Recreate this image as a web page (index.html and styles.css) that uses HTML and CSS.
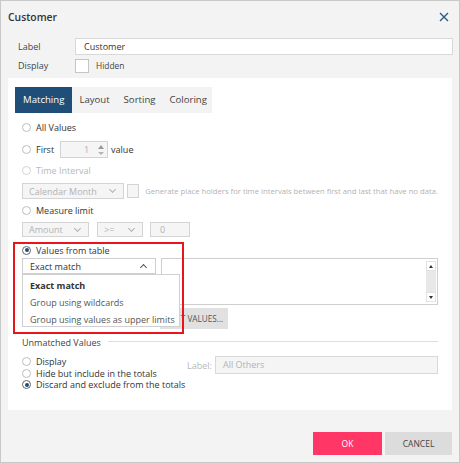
FILE: index.html
```html
<!DOCTYPE html>
<html>
<head>
<meta charset="utf-8">
<link rel="stylesheet" href="styles.css">
</head>
<body>
<div class="dialog">
  <div class="header">
    <div class="title">Customer</div>
    <svg class="close" width="10" height="10" viewBox="0 0 10 10"><path d="M1 1L9 9M9 1L1 9" stroke="#2a5783" stroke-width="1.3" fill="none"/></svg>
  </div>
  <div class="fields">
    <div class="field-row">
      <span class="field-label">Label</span>
      <div class="text-input">Customer</div>
    </div>
    <div class="field-row display-row">
      <span class="field-label">Display</span>
      <span class="checkbox"></span>
      <span class="hidden-text">Hidden</span>
    </div>
  </div>
  <div class="panel">
    <div class="tabs">
      <div class="tab active">Matching</div>
      <div class="tab">Layout</div>
      <div class="tab">Sorting</div>
      <div class="tab">Coloring</div>
    </div>
    <div class="opts">
      <div class="row r-all"><span class="radio"></span><span>All Values</span></div>
      <div class="row r-first">
        <span class="radio"></span><span>First</span>
        <div class="spinner">
          <span class="spin-val">1</span>
          <span class="spin-arrows"><span class="up"></span><span class="down"></span></span>
        </div>
        <span>value</span>
      </div>
      <div class="row r-time disabled"><span class="radio"></span><span>Time Interval</span></div>
      <div class="row r-cal">
        <div class="select dis w-cal"><span>Calendar Month</span><span class="chev"></span></div>
        <span class="checkbox small"></span>
        <span class="gen-text">Generate place holders for time intervals between first and last that have no data.</span>
      </div>
      <div class="row r-measure"><span class="radio"></span><span>Measure limit</span></div>
      <div class="row r-sel">
        <div class="select dis w-amt"><span>Amount</span><span class="chev"></span></div>
        <div class="select dis w-op"><span>&gt;=</span><span class="chev"></span></div>
        <div class="select dis w-zero"><span>0</span></div>
      </div>
      <div class="row r-table"><span class="radio checked"></span><span>Values from table</span></div>
      <div class="table-area">
        <div class="left-col">
          <div class="select open w-match"><span>Exact match</span><span class="chev up-chev"></span></div>
          <div class="dropdown">
            <div class="dd-item bold">Exact match</div>
            <div class="dd-item">Group using wildcards</div>
            <div class="dd-item">Group using values as upper limits</div>
          </div>
        </div>
        <div class="right-col">
          <div class="textarea">
            <div class="sb">
              <div class="sb-btn"><span class="tri-up"></span></div>
              <div class="sb-track"></div>
              <div class="sb-btn"><span class="tri-down"></span></div>
            </div>
          </div>
          <div class="edit-btn"><span class="edit-hidden">EDI</span>T VALUES...</div>
        </div>
      </div>
      <div class="unmatched-head"><span>Unmatched Values</span><span class="line"></span></div>
      <div class="unmatched">
        <div class="um-col">
          <div class="um-row"><span class="radio"></span><span>Display</span></div>
          <div class="um-row"><span class="radio"></span><span>Hide but include in the totals</span></div>
          <div class="um-row"><span class="radio checked"></span><span>Discard and exclude from the totals</span></div>
        </div>
        <div class="um-label">
          <span class="lbl">Label:</span>
          <div class="other-input">All Others</div>
        </div>
      </div>
    </div>
    <div class="highlight"></div>
  </div>
  <div class="footer">
    <div class="btn ok">OK</div>
    <div class="btn cancel">CANCEL</div>
  </div>
</div>
</body>
</html>
```
FILE: styles.css
```css
* { box-sizing: border-box; }
html, body { margin: 0; padding: 0; }
body {
  font-family: "Open Sans", "Noto Sans", sans-serif;
  font-size: 9px;
  color: #333;
  background: #fff;
}
.dialog {
  width: 460px;
  height: 463px;
  border: 1px solid #c9c9c9;
  background: #f3f3f3;
  padding: 0 7px;
}
.header {
  height: 31px;
  display: flex;
  align-items: center;
  justify-content: space-between;
}
.title {
  font-size: 10.4px;
  font-weight: 600;
  color: #333;
}
.close { margin-right: 3px; }
.fields { margin-top: 6px; margin-right: -1px; }
.field-row {
  display: flex;
  align-items: center;
  height: 17px;
}
.field-label {
  width: 67px;
  padding-left: 10px;
  color: #444;
}
.text-input {
  flex: 1;
  height: 17px;
  background: #fff;
  border: 1px solid #d9d9d9;
  padding-left: 8px;
  line-height: 15px;
}
.display-row { margin-top: 3px; height: 15px; }
.checkbox {
  width: 14px;
  height: 14px;
  background: #fff;
  border: 1px solid #c4c4c4;
  display: inline-block;
}
.hidden-text { margin-left: 7px; font-size: 8.4px; color: #444; }
.panel {
  margin-top: 5px;
  height: 332px;
  background: #fff;
  padding: 9px 7px;
  position: relative;
}
.tabs {
  display: flex;
  width: 197px;
  height: 26px;
  background: #f3f3f3;
}
.tab {
  padding: 0 7px;
  line-height: 26px;
  color: #444;
  font-size: 9.6px;
}
.tab.active {
  background: #1f4e79;
  color: #fff;
  padding: 0 8px;
}
.opts { margin: 0 7px; }
.row {
  display: flex;
  align-items: center;
  height: 16px;
}
.radio {
  width: 9px;
  height: 9px;
  border: 1px solid #bdbdbd;
  border-radius: 50%;
  margin-right: 5px;
  display: inline-block;
  position: relative;
  flex: none;
}
.radio.checked { border-color: #666; }
.radio.checked::after {
  content: "";
  position: absolute;
  left: 1.5px; top: 1.5px;
  width: 4px; height: 4px;
  border-radius: 50%;
  background: #1f4e79;
}
.disabled { color: #b8b8b8; }
.disabled .radio { border-color: #d4d4d4; }
.r-all { margin-top: 6px; }
.r-first { margin-top: 6px; height: 17px; }
.spinner {
  width: 48px;
  height: 17px;
  border: 1px solid #d4d4d4;
  background: #f5f5f5;
  margin: 0 3px 0 6px;
  display: flex;
  align-items: center;
  justify-content: flex-end;
  color: #b0b0b0;
}
.spin-val { margin-right: 9px; }
.spin-arrows {
  display: flex;
  flex-direction: column;
  gap: 3px;
  margin-right: 3px;
}
.spin-arrows .up { width: 0; height: 0; border-left: 3px solid transparent; border-right: 3px solid transparent; border-bottom: 4px solid #9a9a9a; }
.spin-arrows .down { width: 0; height: 0; border-left: 3px solid transparent; border-right: 3px solid transparent; border-top: 3px solid #b5b5b5; }
.r-time { margin-top: 4px; }
.r-cal { margin-top: 5px; }
.select {
  height: 16px;
  border: 1px solid #d4d4d4;
  display: flex;
  align-items: center;
  justify-content: space-between;
  padding: 0 8px 0 6px;
  flex: none;
}
.select.dis { background: #f5f5f5; color: #b3b3b3; }
.chev {
  width: 5px; height: 5px;
  border-right: 1px solid #b0b0b0;
  border-bottom: 1px solid #b0b0b0;
  transform: rotate(45deg);
  margin-top: -3px;
}
.up-chev {
  transform: rotate(225deg);
  margin-top: 3px;
  border-color: #555;
}
.w-cal { width: 102px; }
.checkbox.small { width: 13px; height: 14px; margin-left: 3px; background: #f5f5f5; border-color: #d4d4d4; }
.gen-text { font-size: 7.7px; color: #b3b3b3; margin-left: 6px; white-space: nowrap; }
.r-measure { margin-top: 3px; }
.r-sel { margin-top: 4px; height: 15px; }
.r-sel .select { height: 15px; }
.w-amt { width: 67px; }
.w-op { width: 46px; margin-left: 8px; }
.w-zero { width: 40px; margin-left: 7px; padding-left: 9px; }
.r-table { margin-top: 5px; }
.table-area { display: flex; position: relative; }
.left-col { width: 139px; position: relative; flex: none; }
.select.open { width: 134px; background: #fff; border-color: #cfcfcf; color: #333; padding-left: 7px; padding-right: 9px; }
.dropdown {
  position: absolute;
  left: 0; top: 16px;
  width: 158px;
  height: 53px;
  background: #fff;
  border: 1px solid #d0d0d0;
  padding-top: 2px;
  z-index: 2;
}
.dd-item { height: 17px; line-height: 17px; padding-left: 7px; color: #555; white-space: nowrap; }
.dd-item.bold { font-weight: 700; color: #333; }
.right-col { flex: 1; }
.textarea {
  height: 47px;
  border: 1px solid #cfcfcf;
  background: #fff;
  display: flex;
  justify-content: flex-end;
  padding: 2px 1px;
}
.sb { width: 10px; display: flex; flex-direction: column; }
.sb-btn { height: 10px; background: #fff; display: flex; align-items: center; justify-content: center; border: 1px solid #e2e2e2; }
.sb-track { flex: 1; background: #e8e8e8; }
.tri-up { width: 0; height: 0; border-left: 2.5px solid transparent; border-right: 2.5px solid transparent; border-bottom: 3px solid #333; }
.tri-down { width: 0; height: 0; border-left: 2.5px solid transparent; border-right: 2.5px solid transparent; border-top: 3px solid #333; }
.edit-btn {
  margin-top: 3px;
  width: 68px;
  height: 21px;
  background: #e1e1e1;
  color: #555;
  font-size: 8.2px;
  line-height: 21px;
  padding-left: 8px;
  white-space: nowrap;
  margin-left: -1px;
}
.edit-hidden { visibility: hidden; }
.unmatched-head {
  display: flex;
  align-items: center;
  margin-top: 5px;
  height: 16px;
  color: #444;
}
.unmatched-head .line { flex: 1; height: 1px; background: #dedede; margin-left: 7px; margin-top: -2px; }
.unmatched { display: flex; margin-top: 6px; }
.um-col { width: 165px; flex: none; }
.um-row { display: flex; align-items: center; height: 11.5px; line-height: 11.5px; white-space: nowrap; }
.um-label { flex: 1; display: flex; align-items: center; height: 18px; }
.lbl { color: #b8b8b8; width: 28px; }
.other-input {
  flex: 1;
  height: 18px;
  border: 1px solid #d9d9d9;
  background: #f5f5f5;
  color: #b3b3b3;
  padding-left: 7px;
  line-height: 16px;
}
.highlight {
  position: absolute;
  left: 5px; top: 164px;
  width: 171px; height: 92px;
  border: 2px solid #e8151c;
  pointer-events: none;
  z-index: 3;
}
.footer {
  display: flex;
  justify-content: flex-end;
  gap: 3px;
  margin-top: 22px;
}
.btn {
  height: 23px;
  line-height: 23px;
  text-align: center;
  font-size: 8.5px;
}
.ok { width: 69px; background: #ff3666; color: #fff; }
.cancel { width: 67px; background: #dcdcdc; color: #444; }
```
